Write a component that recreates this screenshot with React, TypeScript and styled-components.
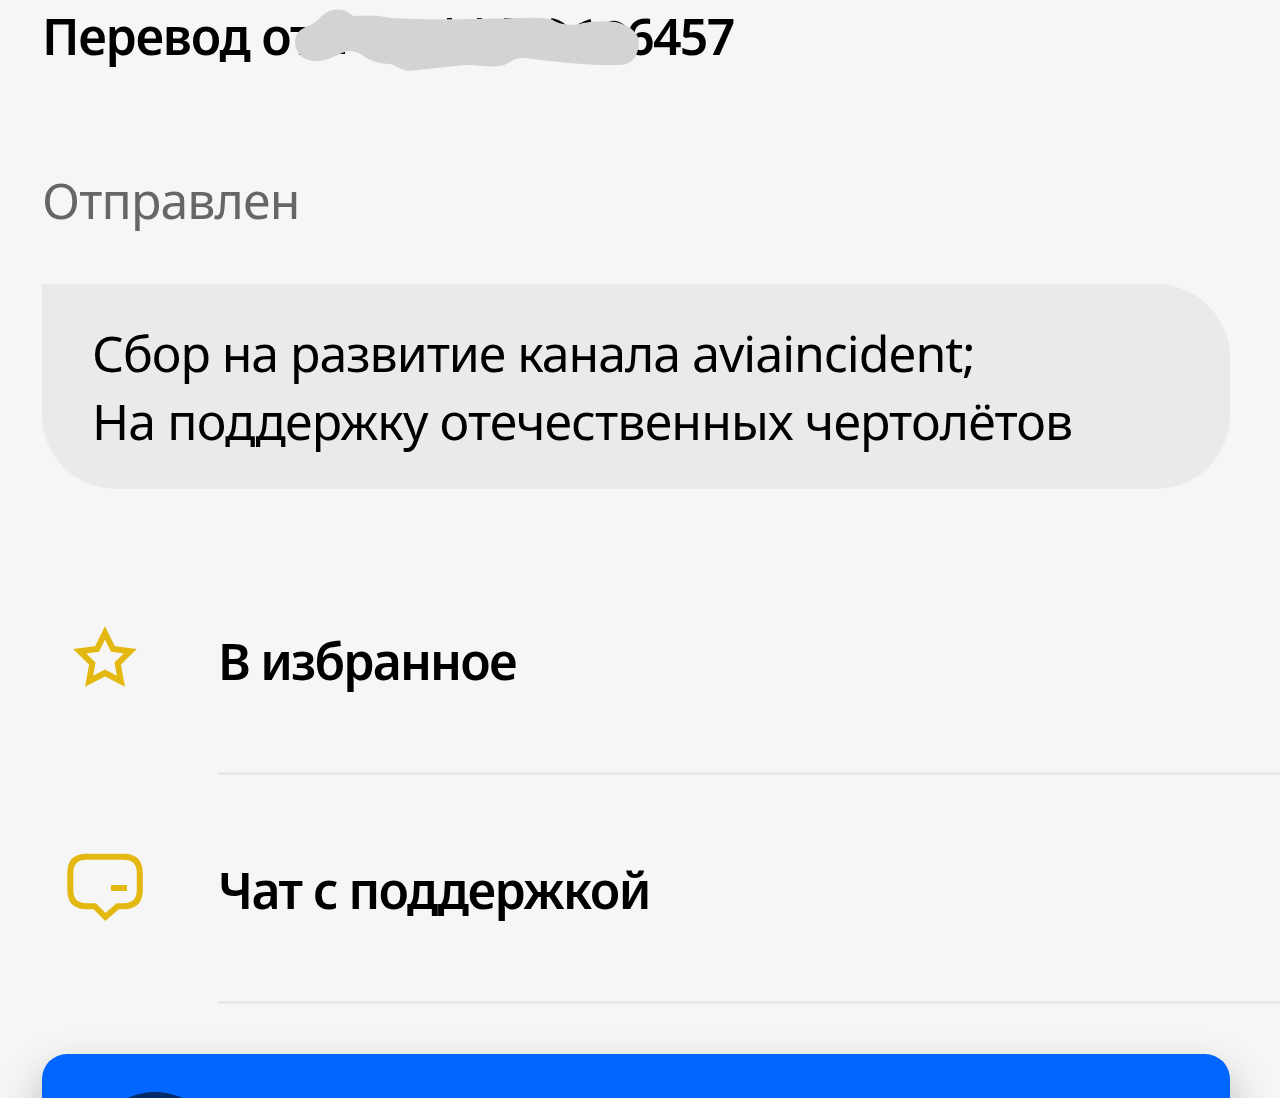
import React from 'react';
import styled, { createGlobalStyle } from 'styled-components';

const GlobalStyle = createGlobalStyle`
  body {
    margin: 0;
    background: #f6f6f6;
  }
`

const Page = styled.main`
  box-sizing: border-box;
  display: flex;
  flex-direction: column;
  width: 1280px;
  height: 1098px;
  padding-top: 2px;
  overflow: hidden;
  background: #f6f6f6;
  color: #000;
  font-family: "Noto Sans", "Open Sans", sans-serif;
  font-size: 50px;
  line-height: 68px;
  white-space: nowrap;
`

const Title = styled.h1`
  position: relative;
  display: flex;
  flex: none;
  margin: 0 0 0 42px;
  font-size: 50px;
  font-weight: 600;
  letter-spacing: -1.3px;
`

const Sender = styled.span`
  width: 584px;
`

const Digits = styled.span`
  letter-spacing: -1.7px;
`

const Scribble = styled.svg`
  position: absolute;
  top: 6px;
  left: 248px;
`

const Status = styled.p`
  flex: none;
  margin: 96px 0 0 42px;
  color: #666;
  letter-spacing: -0.9px;
`

const Message = styled.section`
  box-sizing: border-box;
  flex: none;
  width: 1188px;
  height: 205px;
  margin: 50px 0 0 42px;
  padding: 35px 50px;
  border-radius: 0 74px 74px 74px;
  background: #eaeaea;
`

const MessageLine = styled.p<{ $spacing: string }>`
  margin: 0;
  letter-spacing: ${props => props.$spacing};
`

const Actions = styled.nav`
  display: flex;
  flex: none;
  flex-direction: column;
  margin-top: 57px;
`

const Action = styled.a`
  box-sizing: border-box;
  display: flex;
  height: 229px;
  padding-left: 60px;
`

const IconBox = styled.span`
  display: flex;
  flex: none;
  align-items: center;
  width: 158px;
  height: 220px;
`

const ActionLabel = styled.span<{ $spacing: string }>`
  box-sizing: border-box;
  flex: 1;
  padding-top: 81px;
  border-bottom: 3px solid #e8e8e8;
  font-weight: 600;
  letter-spacing: ${props => props.$spacing};
`

const Card = styled.section`
  box-sizing: border-box;
  flex: none;
  width: 1188px;
  height: 240px;
  margin: 50px 0 0 42px;
  padding: 38px 49px;
  border-radius: 25px;
  background: #06f;
  box-shadow: 0 20px 44px rgba(0, 0, 0, 0.28);
`

const CardBadge = styled.div`
  width: 128px;
  height: 128px;
  border-radius: 50%;
  background: #052a66;
`

const StarIcon = () => (
  <svg width="90" height="90" viewBox="60 611 90 90">
    <path
      fill="none"
      stroke="#e3b810"
      strokeWidth="6"
      d="M105 633L113 649L130.300 651.200L117.700 663.500L120.900 681.200L105 673L89.100 681.200L92.300 663.500L79.700 651.200L97 649Z"
    />
  </svg>
)

const ChatIcon = () => (
  <svg width="90" height="90" viewBox="60 840 90 90">
    <path
      fill="none"
      stroke="#e3b810"
      strokeWidth="6"
      d="M86.5 856.8H123.5Q139.8 856.8 139.8 873V890Q139.8 906.2 123.5 906.2H117.7L105.4 917L94.7 906.2H86.5Q70.3 906.2 70.3 890V873Q70.3 856.8 86.5 856.8Z"
    />
    <path fill="#e3b810" d="M111 885H127V891H111Z" />
  </svg>
)

const App: React.FC = () => {
  return (
    <Page>
      <GlobalStyle />
      <Title>
        <Sender>Перевод от</Sender>
        <Digits>6457</Digits>
        <Scribble width="360" height="68" viewBox="290 8 360 68">
          <path fill="#000" d="M340 50H345V54H340ZM447 18H452V21H447ZM477 18H482V21H477ZM504 18H517V21H504Z" />
          <path
            fill="none"
            stroke="#000"
            strokeWidth="4"
            d="M551 20Q559 21 565 27M579 26Q584 23 591 21M605 26Q614 19 624 27"
          />
          <path
            fill="#d3d3d3"
            d="M295 42C295 34 300 29 308 26C320 22 322 9.500 338 9.500C346 9.500 349 13 353 16C366 15 380 15 390 18C430 20 470 19 500 18.500C530 17.500 544 17 552 19.500C558 24 568 25.500 577 24.500C590 21 604 20.500 616 22C632 26 639 34 639 43C638 58 631 65 618 65C590 66 558 62 524 58C509 58 511 66 495 66.500C482 67 474 64 460 65.500L413 70.500C401 72 397 65 390 64C380 64 370 61 362 55C354 50 348 50 342 53C333 57 326 61 316 61C303 61 295 53 295 42Z"
          />
        </Scribble>
      </Title>
      <Status>Отправлен</Status>
      <Message>
        <MessageLine $spacing="-1.05px">Сбор на развитие канала aviaincident;</MessageLine>
        <MessageLine $spacing="-0.88px">На поддержку отечественных чертолётов</MessageLine>
      </Message>
      <Actions>
        <Action>
          <IconBox><StarIcon /></IconBox>
          <ActionLabel $spacing="-1.85px">В избранное</ActionLabel>
        </Action>
        <Action>
          <IconBox><ChatIcon /></IconBox>
          <ActionLabel $spacing="-1.55px">Чат с поддержкой</ActionLabel>
        </Action>
      </Actions>
      <Card>
        <CardBadge />
      </Card>
    </Page>
  );
}

export default App;
